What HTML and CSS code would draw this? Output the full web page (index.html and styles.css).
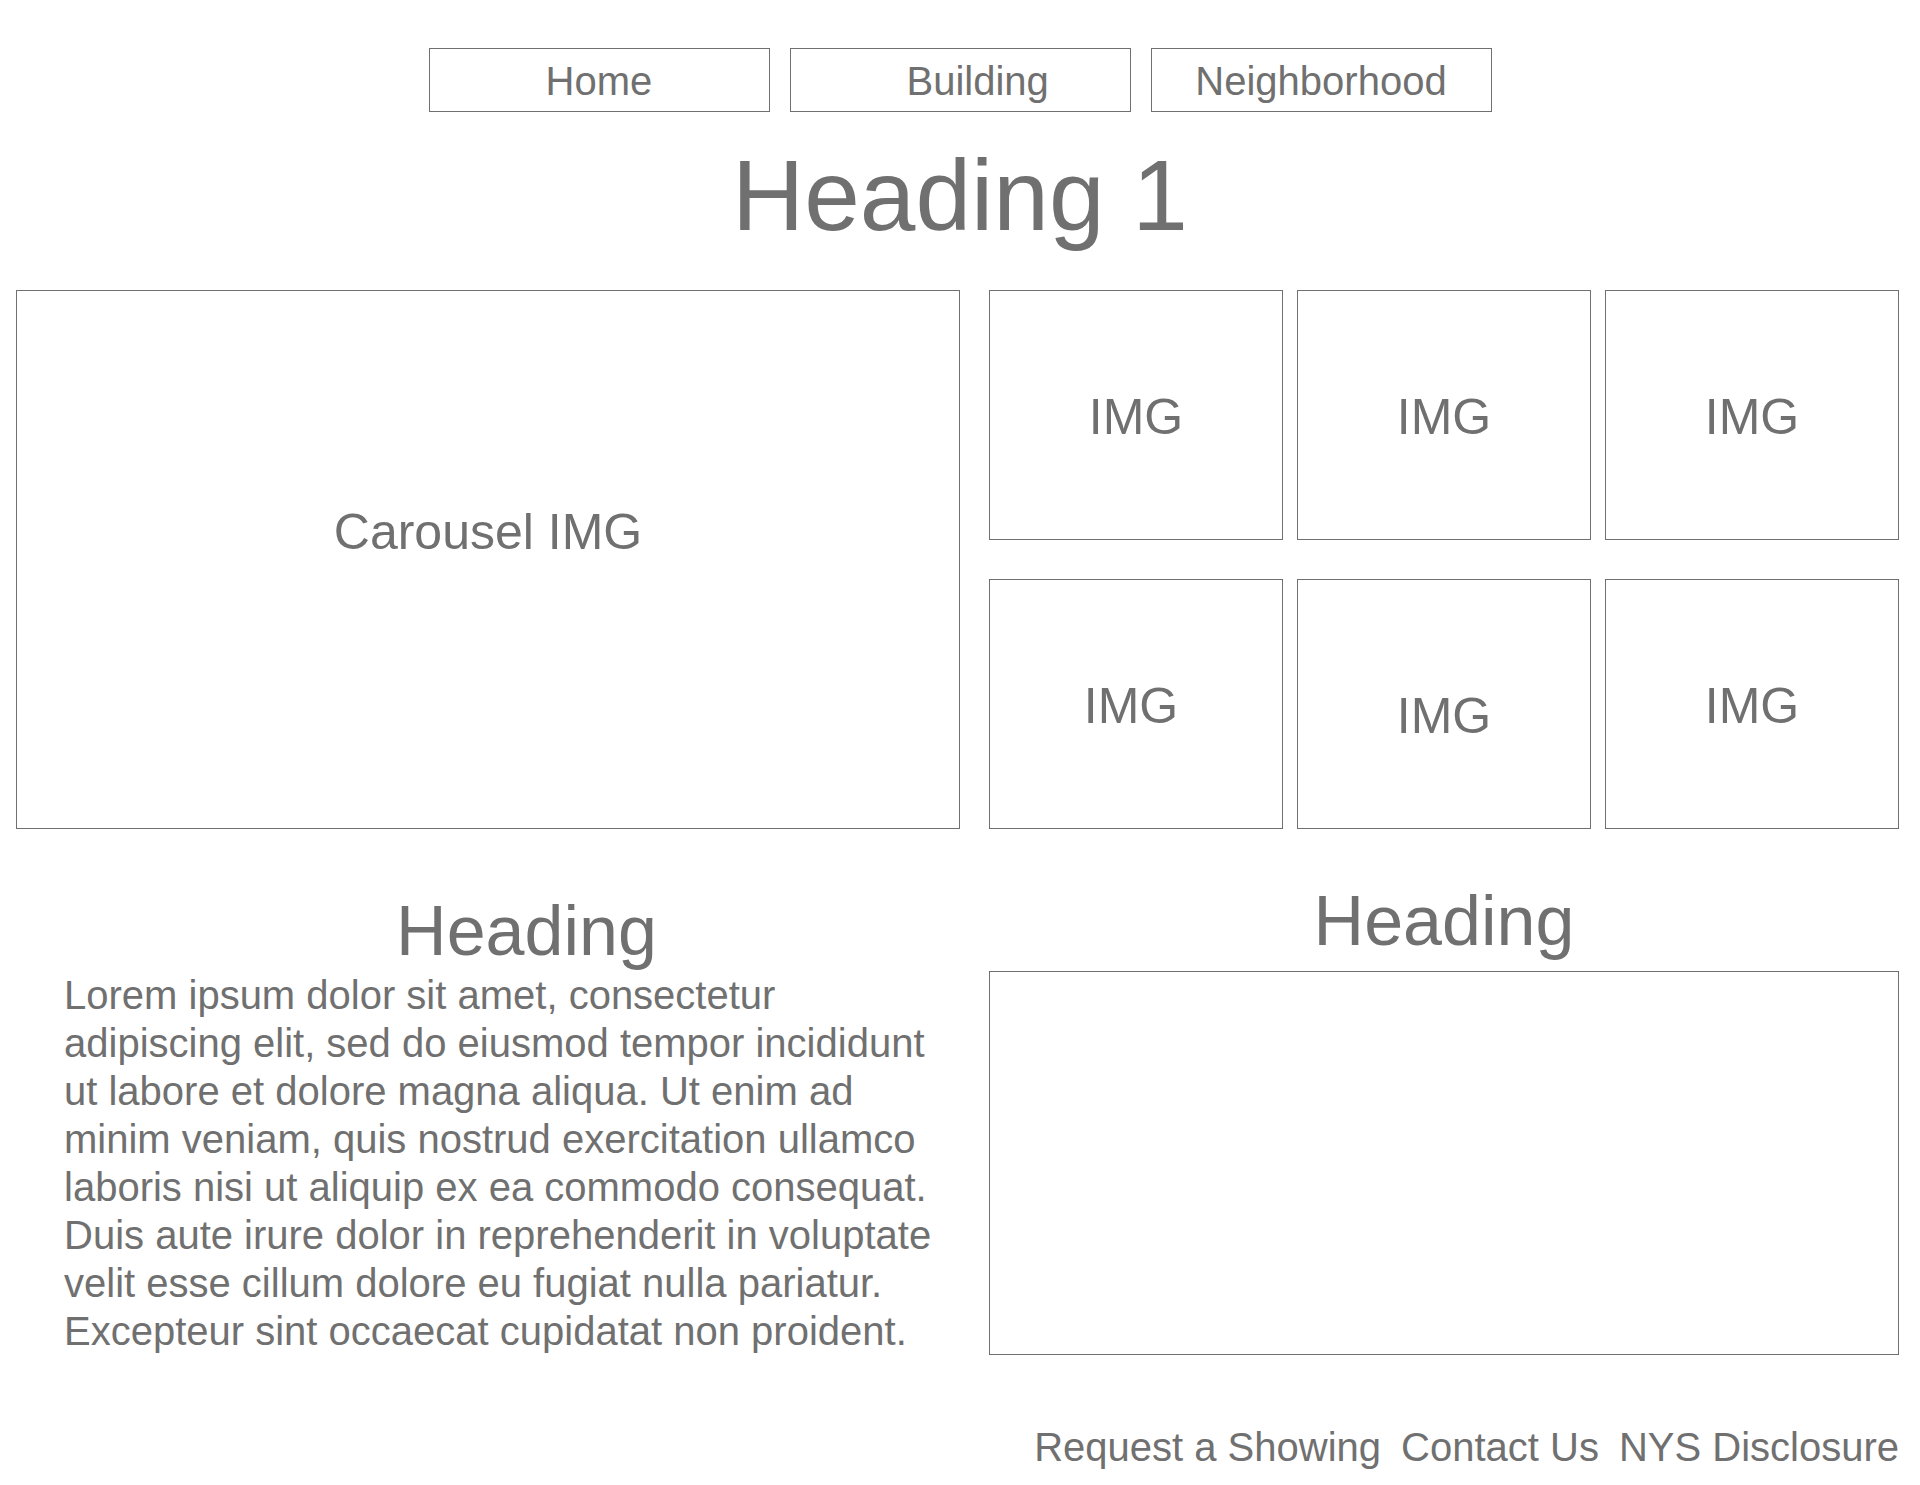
FILE: index.html
```html
<!DOCTYPE html>
<html lang="en">
<head>
  <meta charset="utf-8">
  <meta name="viewport" content="width=device-width, initial-scale=1">
  <title>Heading 1</title>
  <link rel="stylesheet" href="styles.css">
</head>
<body>
  <header class="site-header">
    <nav class="nav" aria-label="Main">
      <a class="nav-link nav-link-start" href="#home">Home</a>
      <a class="nav-link nav-link-start" href="#building">Building</a>
      <a class="nav-link" href="#neighborhood">Neighborhood</a>
    </nav>
    <h1 class="page-title">Heading 1</h1>
  </header>

  <main class="content">
    <section class="media" aria-label="Photos">
      <div class="frame carousel">Carousel IMG</div>
      <div class="gallery">
        <div class="frame tile">IMG</div>
        <div class="frame tile">IMG</div>
        <div class="frame tile">IMG</div>
        <div class="frame tile tile-left">IMG</div>
        <div class="frame tile tile-low">IMG</div>
        <div class="frame tile">IMG</div>
      </div>
    </section>

    <div class="details">
      <section class="about">
        <h2 class="section-title">Heading</h2>
        <p class="about-text">Lorem ipsum dolor sit amet, consectetur adipiscing elit, sed do eiusmod tempor incididunt ut labore et dolore magna aliqua. Ut enim ad minim veniam, quis nostrud exercitation ullamco laboris nisi ut aliquip ex ea commodo consequat. Duis aute irure dolor in reprehenderit in voluptate velit esse cillum dolore eu fugiat nulla pariatur. Excepteur sint occaecat cupidatat non proident.</p>
      </section>
      <section class="feature">
        <h2 class="section-title">Heading</h2>
        <div class="frame feature-box"></div>
      </section>
    </div>
  </main>

  <footer class="footer">
    <a class="footer-link" href="#showing">Request a Showing</a>
    <a class="footer-link" href="#contact">Contact Us</a>
    <a class="footer-link" href="#disclosure">NYS Disclosure</a>
  </footer>
</body>
</html>
```
FILE: styles.css
```css
*,
*::before,
*::after {
  box-sizing: border-box;
}

body {
  margin: 0;
  background: #fff;
  color: #707070;
  font-family: "Liberation Sans", Arial, Helvetica, sans-serif;
  font-size: 40px;
  line-height: 48px;
}

h1,
h2,
p {
  margin: 0;
  font-weight: 400;
}

a {
  color: inherit;
  text-decoration: none;
}

.site-header {
  padding-top: 48px;
}

.nav {
  display: grid;
  grid-template-columns: repeat(3, 1fr);
  gap: 20px;
  max-width: 1063px;
  margin: 0 auto;
}

.nav-link {
  padding: 8px 0 6px;
  border: 1px solid #707070;
  text-align: center;
}

.nav-link-start {
  padding-left: 116px;
  text-align: left;
}

.page-title {
  padding: 23px 0 35px;
  font-size: 100px;
  line-height: 120px;
  text-align: center;
}

.content {
  padding: 0 21px 0 16px;
}

.frame {
  display: flex;
  align-items: center;
  justify-content: center;
  border: 1px solid #707070;
  font-size: 50px;
  line-height: 60px;
}

.media {
  display: grid;
  grid-template-columns: 944fr 910fr;
  gap: 29px;
}

.carousel {
  padding-bottom: 56px;
}

.gallery {
  display: grid;
  grid-template-columns: repeat(3, 1fr);
  gap: 39px 14px;
}

.tile {
  padding-top: 4px;
  aspect-ratio: 294 / 250;
}

.tile-left {
  padding-right: 10px;
}

.tile-low {
  padding-top: 24px;
}

.details {
  display: grid;
  grid-template-columns: 973fr 910fr;
}

.section-title {
  font-size: 70px;
  line-height: 80px;
  text-align: center;
}

.about {
  padding: 62px 0 0 48px;
}

.about-text {
  padding-right: 29px;
}

.feature {
  display: flex;
  flex-direction: column;
  gap: 10px;
  padding-top: 52px;
}

.feature-box {
  flex: 1;
}

.footer {
  display: flex;
  flex-wrap: wrap;
  justify-content: flex-end;
  gap: 20px;
  padding: 68px 21px 14px;
}
```
